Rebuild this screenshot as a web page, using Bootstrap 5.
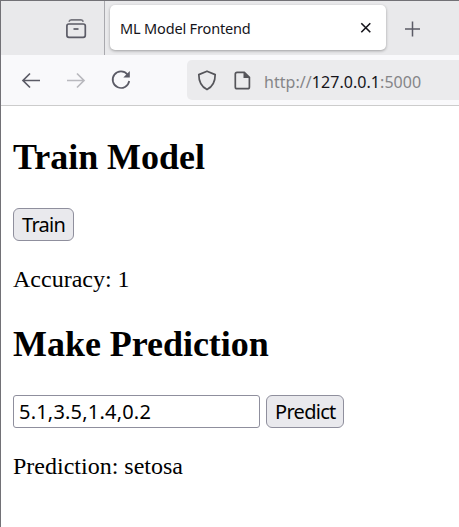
<!DOCTYPE html>
<html lang="en">
<head>
<meta charset="utf-8">
<meta name="viewport" content="width=device-width, initial-scale=1">
<title>ML Model Frontend</title>
<link href="https://cdn.jsdelivr.net/npm/bootstrap@5.3.0/dist/css/bootstrap.min.css" rel="stylesheet">
<style>
body { font-family: "Noto Sans", sans-serif; color: #000; }
svg { display: block; fill: none; stroke: #5b5b66; stroke-width: 1.7; flex: none; }
.browser { height: 527px; border-left: 1px solid #727176; border-top: 1px solid #727176; }
.tabstrip { height: 54px; background: #e9e9eb; }
.pinned { width: 104px; border-right: 1px solid #a9a9ae; padding: 16px 0 0 63px; }
.tab { width: 276px; height: 45px; margin: 4px 0 0 5px; padding: 0 12px 0 10px; border-radius: 5px; box-shadow: 0 1px 3px rgba(0,0,0,.32); font-size: 14.5px; color: #15141a; }
.tab-title { letter-spacing: -.16px; padding-top: 2px; }
.new-tab { margin: 19px 0 0 17px; }
.toolbar { height: 51px; background: #f9f9fb; border-bottom: 1px solid #ccc; padding-left: 18px; }
.nav-icons { gap: 21px; width: 168px; }
.address { height: 40px; background: #ebebed; border-radius: 5px 0 0 5px; padding-left: 8px; }
.address svg { stroke: #55555a; }
.url { font-size: 16px; color: #858588; margin-left: 9px; padding-top: 4px; letter-spacing: .05px; }
.url b { font-weight: 400; color: #15141a; }
.page { padding: 30px 12px 0; font: 24px/28px "Liberation Serif", serif; }
.page h2 { font-size: 36px; line-height: 42px; font-weight: 700; margin: 0 0 30px; letter-spacing: -.04px; }
.page p { margin: 24px 0 30px; }
.control { height: 33px; border: 1px solid #8f8f9d; font: 20px/29px "Noto Sans", sans-serif; color: #000; }
.action { background: #e9e9ed; border-radius: 6px; padding: 0 0 0 8px; text-align: left; letter-spacing: -.7px; }
.train { width: 61px; }
.features { width: 247px; border-radius: 3px; padding: 0 5px; letter-spacing: .2px; }
.predict-row { gap: 6px; }
.predict { width: 78px; }
</style>
</head>
<body>
<div class="browser overflow-hidden bg-white">
  <div class="tabstrip d-flex">
    <div class="pinned">
      <svg width="24" height="24" viewBox="0 0 24 24"><path d="M5 4.700Q5.500 2.800 7.300 2.800H17Q18.800 2.800 19.200 4.700" stroke="#77777f"/><rect x="2.900" y="7" width="18.400" height="13.300" rx="2"/><path d="M9.500 12h5"/></svg>
    </div>
    <div class="tab bg-white d-flex align-items-center justify-content-between">
      <span class="tab-title text-nowrap">ML Model Frontend</span>
      <svg width="16" height="16" viewBox="0 0 16 16"><path d="m3.300 3.300 9 9m0-9-9 9" stroke="#15141a" stroke-width="1.600"/></svg>
    </div>
    <svg class="new-tab" width="18" height="18" viewBox="0 0 18 18"><path d="M9.500 1.500v15M2 9h15" stroke-width="1.500"/></svg>
  </div>
  <div class="toolbar d-flex align-items-center">
    <div class="nav-icons d-flex align-items-center">
      <svg width="24" height="24" viewBox="0 0 24 24"><path d="M21 12.500H4m7-7-7 7 7 7"/></svg>
      <svg width="24" height="24" viewBox="0 0 24 24"><path d="M3 12.500h17m-7-7 7 7-7 7" stroke="#b9b9be"/></svg>
      <svg width="24" height="24" viewBox="0 0 24 24"><path d="M18.500 6.500A8.300 8.300 0 1 0 20.200 13"/><path d="M20.800 3v6.500h-6.500z" fill="#5b5b66" stroke="none"/></svg>
    </div>
    <div class="address d-flex align-items-center flex-grow-1">
      <svg width="24" height="24" viewBox="0 0 24 24"><path d="M12 3.200 20.200 6.600C20.200 12.900 18.500 18.500 12 21.600 5.500 18.500 3.800 12.900 3.800 6.600Z" stroke-linejoin="round"/></svg>
      <svg class="ms-2" width="28" height="24" viewBox="0 0 28 24"><path d="M10.100 4.300h7.200l5.100 5v9.600q0 1.800-1.800 1.800H10.100q-1.800 0-1.800-1.800V6.100q0-1.800 1.800-1.800z"/><path d="M16.500 4v6h6.200z" fill="#55555a" stroke="none"/></svg>
      <span class="url text-nowrap">http://<b>127.0.0.1</b>:5000</span>
    </div>
  </div>
  <main class="page">
    <h2>Train Model</h2>
    <button class="control action train d-block" type="button">Train</button>
    <p>Accuracy: 1</p>
    <h2>Make Prediction</h2>
    <div class="d-flex predict-row">
      <input class="control features" type="text" value="5.1,3.5,1.4,0.2" aria-label="Features">
      <button class="control action predict" type="button">Predict</button>
    </div>
    <p>Prediction: setosa</p>
  </main>
</div>
<script src="https://cdn.jsdelivr.net/npm/bootstrap@5.3.0/dist/js/bootstrap.bundle.min.js"></script>
</body>
</html>
